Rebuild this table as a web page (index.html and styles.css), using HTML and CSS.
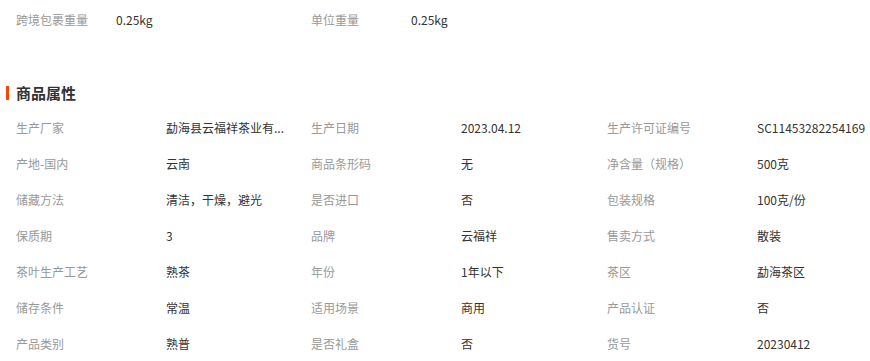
FILE: index.html
```html
<!DOCTYPE html>
<html lang="zh-CN">
<head>
<meta charset="utf-8">
<link rel="stylesheet" href="styles.css">
</head>
<body>
<div class="page">
  <div class="top-row">
    <div class="top-cell"><span class="top-label">跨境包裹重量</span><span class="value">0.25kg</span></div>
    <div class="top-cell"><span class="top-label">单位重量</span><span class="value">0.25kg</span></div>
  </div>
  <h2 class="section-title">商品属性</h2>
  <div class="attr-grid">
    <div class="cell"><span class="label">生产厂家</span><span class="value" title="勐海县云福祥茶业有限公司">勐海县云福祥茶业有...</span></div>
    <div class="cell"><span class="label">生产日期</span><span class="value">2023.04.12</span></div>
    <div class="cell"><span class="label">生产许可证编号</span><span class="value">SC11453282254169</span></div>

    <div class="cell"><span class="label">产地-国内</span><span class="value">云南</span></div>
    <div class="cell"><span class="label">商品条形码</span><span class="value">无</span></div>
    <div class="cell"><span class="label">净含量（规格）</span><span class="value">500克</span></div>

    <div class="cell"><span class="label">储藏方法</span><span class="value">清洁，干燥，避光</span></div>
    <div class="cell"><span class="label">是否进口</span><span class="value">否</span></div>
    <div class="cell"><span class="label">包装规格</span><span class="value">100克/份</span></div>

    <div class="cell"><span class="label">保质期</span><span class="value">3</span></div>
    <div class="cell"><span class="label">品牌</span><span class="value">云福祥</span></div>
    <div class="cell"><span class="label">售卖方式</span><span class="value">散装</span></div>

    <div class="cell"><span class="label">茶叶生产工艺</span><span class="value">熟茶</span></div>
    <div class="cell"><span class="label">年份</span><span class="value">1年以下</span></div>
    <div class="cell"><span class="label">茶区</span><span class="value">勐海茶区</span></div>

    <div class="cell"><span class="label">储存条件</span><span class="value">常温</span></div>
    <div class="cell"><span class="label">适用场景</span><span class="value">商用</span></div>
    <div class="cell"><span class="label">产品认证</span><span class="value">否</span></div>

    <div class="cell"><span class="label">产品类别</span><span class="value">熟普</span></div>
    <div class="cell"><span class="label">是否礼盒</span><span class="value">否</span></div>
    <div class="cell"><span class="label">货号</span><span class="value">20230412</span></div>
  </div>
</div>
</body>
</html>
```
FILE: styles.css
```css
html, body {
  margin: 0;
  padding: 0;
  background: #fff;
  overflow: hidden;
}
body {
  font-family: "Microsoft YaHei", "Noto Sans CJK SC", "Noto Sans", sans-serif;
  font-size: 12px;
  color: #333;
}
.page {
  width: 870px;
  overflow: hidden;
}
.top-row {
  display: flex;
  padding: 10px 0 0 16px;
  line-height: 20px;
}
.top-cell {
  display: flex;
  width: 295px;
  flex: none;
}
.top-label {
  width: 100px;
  color: #999;
  flex: none;
}
.section-title {
  margin: 53px 0 0 0;
  padding-left: 16px;
  position: relative;
  font-size: 15px;
  font-weight: bold;
  line-height: 20px;
  color: #333;
}
.section-title::before {
  content: "";
  position: absolute;
  left: 6px;
  top: 3px;
  width: 3px;
  height: 14px;
  background: #ff4400;
}
.attr-grid {
  display: grid;
  grid-template-columns: 295px 296px 279px;
  grid-auto-rows: 36px;
  margin-top: 7px;
  padding-left: 16px;
}
.cell {
  display: flex;
  align-items: center;
  line-height: 20px;
  white-space: nowrap;
}
.label {
  width: 150px;
  flex: none;
  color: #999;
}
.value {
  color: #333;
}
```
